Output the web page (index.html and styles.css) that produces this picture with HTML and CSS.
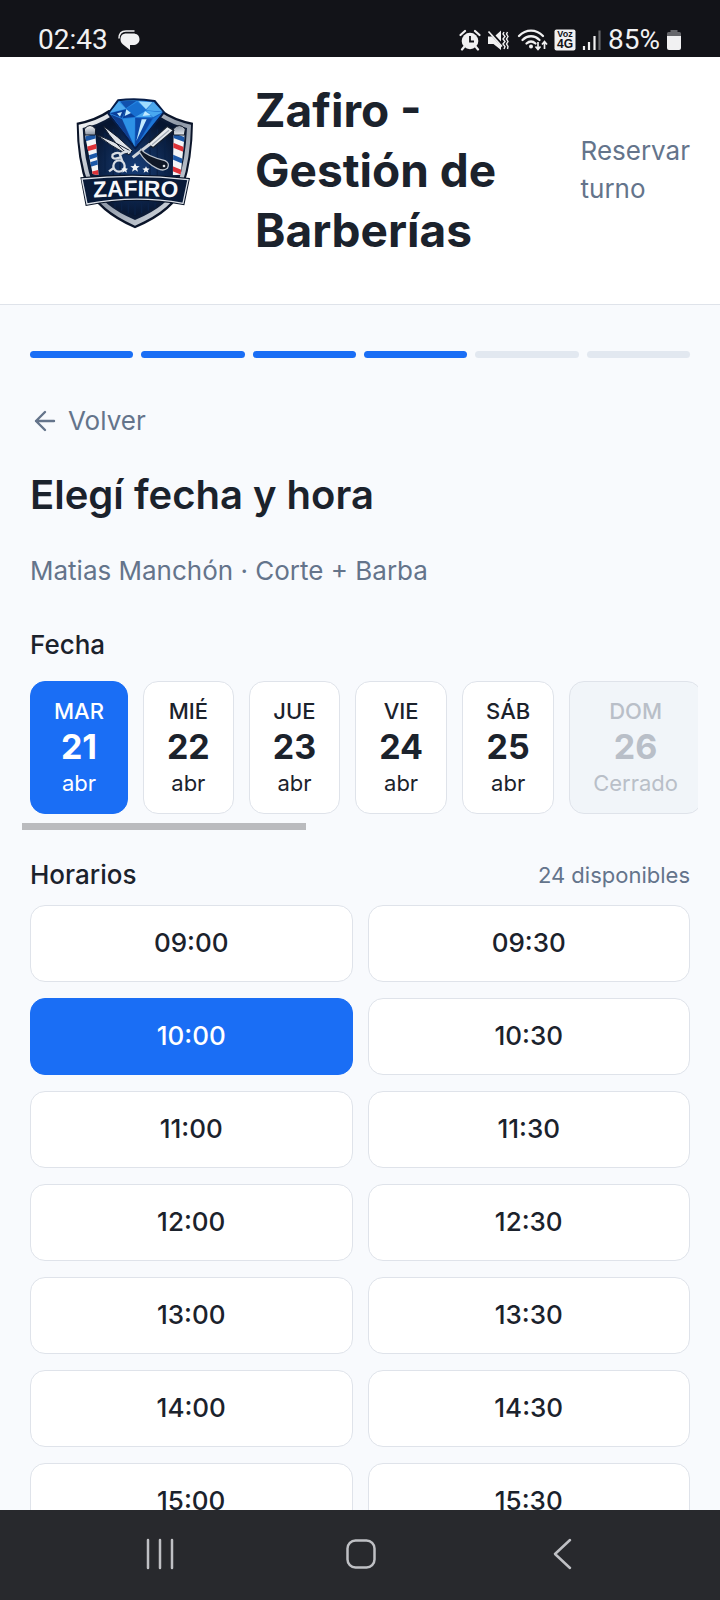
FILE: index.html
```html
<!DOCTYPE html>
<html lang="es">
<head>
<meta charset="utf-8">
<meta name="viewport" content="width=device-width, initial-scale=1">
<title>Zafiro - Gestión de Barberías</title>
<link rel="stylesheet" href="styles.css">
</head>
<body>
<div class="screen">
  <div class="status">
    <div class="status-group">
      <span>02:43</span>
      <svg class="chat" width="22" height="22" viewBox="0 0 22 22"><path d="M8.500 4.500H15C19 4.500 21.500 6.500 21.500 10.500C21.500 14 18.500 16 15 16H12V21L5 15.500C3 14 2.500 12 2.500 10.500C2.500 6.500 4.500 4.500 8.500 4.500Z" fill="#f1f1f2"/><path d="M1 9.500C1 5 3.500 2 8 2H16.500" fill="none" stroke="#f1f1f2" stroke-width="1.500"/></svg>
    </div>
    <div class="status-group">
      <svg width="22" height="22" viewBox="0 0 22 22"><circle cx="11" cy="12" r="8.300" fill="#f1f1f2"/><path d="M11 7V12.500H15" fill="none" stroke="#121318" stroke-width="1.800"/><path d="M1.500 6L6 2M20.500 6L16 2M5 18L3 20.500M17 18L19 20.500" stroke="#f1f1f2" stroke-width="2.200" stroke-linecap="round"/></svg>
      <svg class="mute" width="22" height="22" viewBox="0 0 22 22"><path d="M1 7.500H5L14 17V21L6.500 15H1ZM14 1.500V12.500L8.500 6.500Z" fill="#f1f1f2"/><path d="M1.500 2.500L15 17.500" stroke="#f1f1f2" stroke-width="1.700"/><path d="M17 3L16 5L18 7.500L16 10L18 12.500L16 15L18 17.500L17 20M20.500 3L19.500 5L21 7.500L19.500 10L21 12.500L19.500 15L21 17.500L20.500 20" fill="none" stroke="#f1f1f2" stroke-width="1.400"/></svg>
      <svg width="31" height="24" viewBox="0 0 31 24"><g fill="none" stroke="#f1f1f2" stroke-width="2.300" stroke-linecap="round"><path d="M2 8C9 .8 19 .8 26 8M5.500 12C10.500 7 17.500 7 22.500 12M9.500 15.500C12.500 12.800 15.500 12.800 18.500 15.500"/></g><circle cx="14" cy="18.500" r="2" fill="#f1f1f2"/><path d="M21 14V21M18.500 18.500L21 21.500L23.500 18.500M27.500 21V14M25 16.500L27.500 13.500L30 16.500" fill="none" stroke="#f1f1f2" stroke-width="1.700"/></svg>
      <svg class="volte" width="22" height="22" viewBox="0 0 22 22"><rect x=".5" y=".5" width="21" height="21" rx="2" fill="#f1f1f2"/><text x="11" y="8" class="volte-top">Voz</text><text x="11" y="19" class="volte-bottom">4G</text></svg>
      <svg width="20" height="22" viewBox="0 0 20 22"><path d="M2 17V21M7 13V21M12.500 7V21" stroke="#f1f1f2" stroke-width="2.200"/><path d="M17.500 1.500V21" stroke="#66676b" stroke-width="2.200"/></svg>
      <span>85%</span>
      <svg width="16" height="22" viewBox="0 0 16 22"><path d="M4.500 1H11.500V3H13.500Q15 3 15 4.500V7H1V4.500Q1 3 2.500 3H4.500Z" fill="#66676b"/><path d="M1 7H15V19Q15 21 13 21H3Q1 21 1 19Z" fill="#f1f1f2"/></svg>
    </div>
  </div>

  <header class="header">
    <div class="brand">
      <svg class="logo" viewBox="0 0 450 450" role="img" aria-label="Zafiro">
        <defs>
          <linearGradient id="gem" x1="0" y1="0" x2="1" y2="1"><stop offset="0" stop-color="#35a4f5"/><stop offset=".5" stop-color="#1669cf"/><stop offset="1" stop-color="#0a3688"/></linearGradient>
          <linearGradient id="steel" x1="0" y1="0" x2="1" y2="1"><stop offset="0" stop-color="#ffffff"/><stop offset=".5" stop-color="#8e98a7"/><stop offset="1" stop-color="#e7ebef"/></linearGradient>
          <radialGradient id="navy"><stop offset="0" stop-color="#173e79"/><stop offset="1" stop-color="#071631"/></radialGradient>
          <clipPath id="pole-left"><path d="M75 148L106 145L116 268L98 264Z"/></clipPath>
          <clipPath id="pole-right"><path d="M341 145L374 148L362 266L338 268Z"/></clipPath>
          <path id="name-curve" d="M98 335Q225 326 356 335"/>
        </defs>
        <path d="M50 110Q105 100 146 72H305Q345 100 399 110Q398 220 371 300Q346 376 225 427Q110 376 80 302Q50 220 50 110Z" fill="#0a1429"/>
        <path d="M56 116Q110 106 150 79H302Q342 106 393 116Q391 220 365 298Q340 370 225 419Q115 370 87 300Q57 220 56 116Z" fill="url(#steel)"/>
        <path d="M68 126Q115 117 154 91H298Q338 117 381 126Q377 220 353 296Q329 358 225 402Q125 360 99 298Q71 220 68 126Z" fill="#0b1a35"/>
        <path d="M76 131Q116 122 156 98H294Q335 122 374 131Q370 220 345 293Q322 350 225 391Q132 352 106 294Q79 220 76 131Z" fill="url(#navy)"/>
        <path d="M135 140V260M160 130V270M180 130V270M270 130V270M292 130V270M315 140V260M165 350V365M185 350V374M205 350V382M225 350V388M245 350V382M265 350V374M285 350V365" stroke="#0a2147" stroke-width="4"/>
        <g clip-path="url(#pole-left)"><path d="M70 140H120V275H70Z" fill="#f4f5f7"/><path d="M68 161L125 145M76 240L125 225" stroke="#1c58a8" stroke-width="14"/><path d="M68 193L125 176M80 268L125 256" stroke="#dd3238" stroke-width="14"/><path d="M70 220L125 202" stroke="#1c58a8" stroke-width="13"/></g>
        <g clip-path="url(#pole-right)"><path d="M330 140H380V275H330Z" fill="#f4f5f7"/><path d="M330 145L380 163M330 210L380 231" stroke="#1c58a8" stroke-width="14"/><path d="M330 174L380 194M330 245L380 265" stroke="#dd3238" stroke-width="14"/></g>
        <path d="M73 129Q90 108 107 129L106 147H75ZM340 129Q358 108 376 129L373 147H341Z" fill="url(#steel)" stroke="#101827" stroke-width="3"/>
        <path d="M129 119Q174 151 217 193L207 207Q165 176 129 119ZM110 146Q160 164 208 193L199 204Q152 180 110 146Z" fill="#dfe3e8" stroke="#111a2b" stroke-width="3"/>
        <g fill="none" stroke="#d8dde4" stroke-width="7"><path d="M212 198Q195 193 180 206L187 226M184 204Q170 196 158 206Q154 218 168 218L182 214"/><circle cx="177" cy="240" r="17"/><path d="M161 246L147 256"/></g>
        <path d="M322 121L341 133L279 185L263 174Z" fill="#e8ebee" stroke="#16202f" stroke-width="4"/>
        <path d="M273 132" fill="none"/>
        <path d="M327 133L276 176" stroke="#a3abb6" stroke-width="4"/>
        <path d="M270 174L218 214" stroke="#d0d5db" stroke-width="9"/>
        <path d="M243 190Q260 210 315 224Q331 232 322 247Q310 257 291 247Q255 229 238 198Z" fill="#101827" stroke="#bbc2cc" stroke-width="4"/><circle cx="312" cy="240" r="4" fill="#e1e5eb"/>
        <path d="M174 43Q228 36 284 45L312 79L226 187L145 83Z" fill="url(#gem)" stroke="#071d48" stroke-width="6" stroke-linejoin="round"/>
        <path d="M176 47L198 68L149 80ZM280 48L308 77L258 73Z" fill="#4da9ee"/>
        <path d="M198 68L232 48L258 73L227 93Z" fill="#176fd0"/>
        <path d="M180 46L230 44L198 67Z" fill="#1151ad"/>
        <path d="M235 46L278 49L258 70Z" fill="#9fdcff"/>
        <path d="M149 82L198 70L186 96ZM198 70L226 92L188 97Z" fill="#0a3f9a"/>
        <path d="M258 74L226 93L277 94ZM259 74L307 79L279 94Z" fill="#49a9f0"/>
        <path d="M187 99L225 95L224 183Z" fill="#2d91e6"/><path d="M226 96L276 98L227 183Z" fill="#0c49a8"/><path d="M151 85L186 99L217 172Z" fill="#103f91"/><path d="M305 82L279 98L233 174Z" fill="#1d76d7"/>
        <path d="M245 100L260 100L229 165ZM199 70L213 81L194 90ZM171 82L186 78L180 92ZM255 76L272 87L248 90Z" fill="#c2eaff"/>
        <path d="M225 231L229 240L239 241L231 247L234 257L225 251L216 257L219 247L211 241L221 240ZM194 241L197 247L204 248L199 253L201 260L194 256L187 260L189 253L184 248L191 247ZM258 241L261 247L269 248L263 253L265 260L258 256L251 260L253 253L247 248L255 247Z" fill="#f3f5f7"/>
        <path d="M61 274Q225 256 390 276L373 358Q225 330 77 360Z" fill="#081327"/>
        <path d="M66 279Q225 262 384 281L369 352Q225 326 81 354Z" fill="#081a38" stroke="#dce1e8" stroke-width="4"/>
        <text class="logo-name" text-anchor="middle"><textPath href="#name-curve" startOffset="50%">ZAFIRO</textPath></text>
      </svg>
    </div>
    <h1 class="title">Zafiro - Gestión de Barberías</h1>
    <a class="reserve" href="#turno">Reservar turno</a>
  </header>

  <main class="content" id="turno">
    <div class="steps" role="img" aria-label="Paso 4 de 6">
      <i class="step done"></i><i class="step done"></i><i class="step done"></i><i class="step done"></i><i class="step"></i><i class="step"></i>
    </div>
    <button class="back" type="button"><svg width="30" height="30" viewBox="0 0 30 30" fill="none" stroke="currentColor" stroke-width="2.400" stroke-linecap="round" stroke-linejoin="round"><path d="M24 15H6M15 6L6 15L15 24"/></svg>Volver</button>
    <h2 class="heading">Elegí fecha y hora</h2>
    <p class="summary">Matias Manchón · Corte + Barba</p>
    <h3 class="label">Fecha</h3>
    <div class="days">
      <button class="day selected" type="button"><span>MAR</span><strong>21</strong><span>abr</span></button>
      <button class="day" type="button"><span>MIÉ</span><strong>22</strong><span>abr</span></button>
      <button class="day" type="button"><span>JUE</span><strong>23</strong><span>abr</span></button>
      <button class="day" type="button"><span>VIE</span><strong>24</strong><span>abr</span></button>
      <button class="day" type="button"><span>SÁB</span><strong>25</strong><span>abr</span></button>
      <button class="day" type="button" disabled><span>DOM</span><strong>26</strong><span>Cerrado</span></button>
    </div>
    <div class="track"><div class="thumb"></div></div>
    <div class="times-head"><h3 class="label">Horarios</h3><span class="count">24 disponibles</span></div>
    <div class="slots">
      <button class="slot" type="button">09:00</button><button class="slot" type="button">09:30</button>
      <button class="slot selected" type="button">10:00</button><button class="slot" type="button">10:30</button>
      <button class="slot" type="button">11:00</button><button class="slot" type="button">11:30</button>
      <button class="slot" type="button">12:00</button><button class="slot" type="button">12:30</button>
      <button class="slot" type="button">13:00</button><button class="slot" type="button">13:30</button>
      <button class="slot" type="button">14:00</button><button class="slot" type="button">14:30</button>
      <button class="slot" type="button">15:00</button><button class="slot" type="button">15:30</button>
    </div>
  </main>

  <nav class="navbar" aria-label="Sistema">
    <button type="button" aria-label="Recientes"><svg width="32" height="32" viewBox="0 0 32 32"><path d="M4 2V30M16 2V30M28 2V30"/></svg></button>
    <button type="button" aria-label="Inicio"><svg width="32" height="32" viewBox="0 0 32 32"><rect x="2.500" y="2.500" width="27" height="27" rx="8"/></svg></button>
    <button type="button" aria-label="Atrás"><svg width="32" height="32" viewBox="0 0 32 32"><path d="M24 2L9 16L24 30"/></svg></button>
  </nav>
</div>
</body>
</html>
```

FILE: styles.css
```css
* { box-sizing: border-box; }
body {
  margin: 0;
  background: #f8fafd;
  color: #1b222c;
  font-family: Inter, "Liberation Sans", sans-serif;
  font-size: 26px;
  line-height: 38px;
}
button { font: inherit; color: inherit; margin: 0; padding: 0; border: 0; background: none; }
h1, h2, h3, p { margin: 0; }
svg { display: block; flex: none; }

.screen { display: flex; flex-direction: column; height: 100vh; }

.status {
  flex: none;
  display: flex;
  justify-content: space-between;
  padding: 24px 38px 1px;
  background: #121318;
  color: #f1f1f2;
  font-family: Roboto, sans-serif;
  font-size: 28px;
  line-height: 32px;
}
.status-group { display: flex; align-items: center; gap: 6px; }
.chat { margin-left: 4px; }
.mute { margin-right: 2px; }
.volte { overflow: visible; }
.volte-top, .volte-bottom { font-family: "Liberation Sans", sans-serif; font-weight: 700; text-anchor: middle; fill: #121318; }
.volte-top { font-size: 9px; }
.volte-bottom { font-size: 12px; }

.header {
  flex: none;
  display: flex;
  align-items: center;
  padding: 23px 30px 44px;
  background: #fff;
  border-bottom: 1px solid #dfe3ea;
}
.brand { flex: none; width: 210px; margin-right: 15px; padding-bottom: 18px; }
.logo { width: 150px; margin: 0 auto; }
.logo-name { font-family: "Liberation Sans", sans-serif; font-weight: 700; font-size: 68px; fill: #f7f8fa; }
.title { flex: 1; font-size: 46px; line-height: 60px; font-weight: 700; }
.reserve { width: min-content; color: #64748b; text-decoration: none; }

.content { flex: 1; min-height: 0; overflow: hidden; padding: 46px 30px 0; }
.steps { display: grid; grid-template-columns: repeat(6, 1fr); gap: 8px; }
.step { height: 7px; border-radius: 4px; background: #e2e8f0; }
.step.done { background: #1a6ef5; }

.back { display: flex; align-items: center; gap: 8px; margin-top: 44px; color: #64748b; }
.heading { margin-top: 32px; font-size: 40px; line-height: 46px; font-weight: 600; }
.summary { margin-top: 34px; color: #64748b; }
.label { font-size: 26px; font-weight: 500; }
.summary + .label { margin-top: 36px; }

.days { display: flex; gap: 15px; margin: 17px -8px 0; padding: 0 8px; overflow: hidden; }
.day {
  flex: none;
  display: flex;
  flex-direction: column;
  align-items: center;
  padding: 14px 23px 15px;
  border: 1px solid #dfe3ea;
  border-radius: 15px;
  background: #fff;
  font-size: 22px;
  line-height: 30px;
}
.day span:first-child { font-weight: 500; }
.day strong { font-size: 34px; line-height: 42px; font-weight: 700; }
.day:disabled { background: #f1f5f9; color: #b9bfc8; }
.day.selected, .slot.selected { background: #1a6ef5; border-color: #1a6ef5; color: #fff; }

.track { margin: 9px -8px 0; }
.thumb { width: 42%; height: 7px; background: #babbbe; }

.times-head { display: flex; justify-content: space-between; align-items: center; margin-top: 26px; }
.count { color: #64748b; font-size: 22px; }
.slots { display: grid; grid-template-columns: 1fr 1fr; gap: 16px 15px; margin-top: 11px; }
.slot {
  padding: 18px 0 19px;
  border: 1px solid #dfe3ea;
  border-radius: 15px;
  background: #fff;
  font-weight: 500;
}

.navbar { flex: none; display: flex; padding: 28px 58px 30px 60px; background: #28292d; }
.navbar button { flex: 1; display: flex; justify-content: center; }
.navbar svg { fill: none; stroke: #bfc0c4; stroke-width: 2.5; stroke-linecap: round; stroke-linejoin: round; }
```
